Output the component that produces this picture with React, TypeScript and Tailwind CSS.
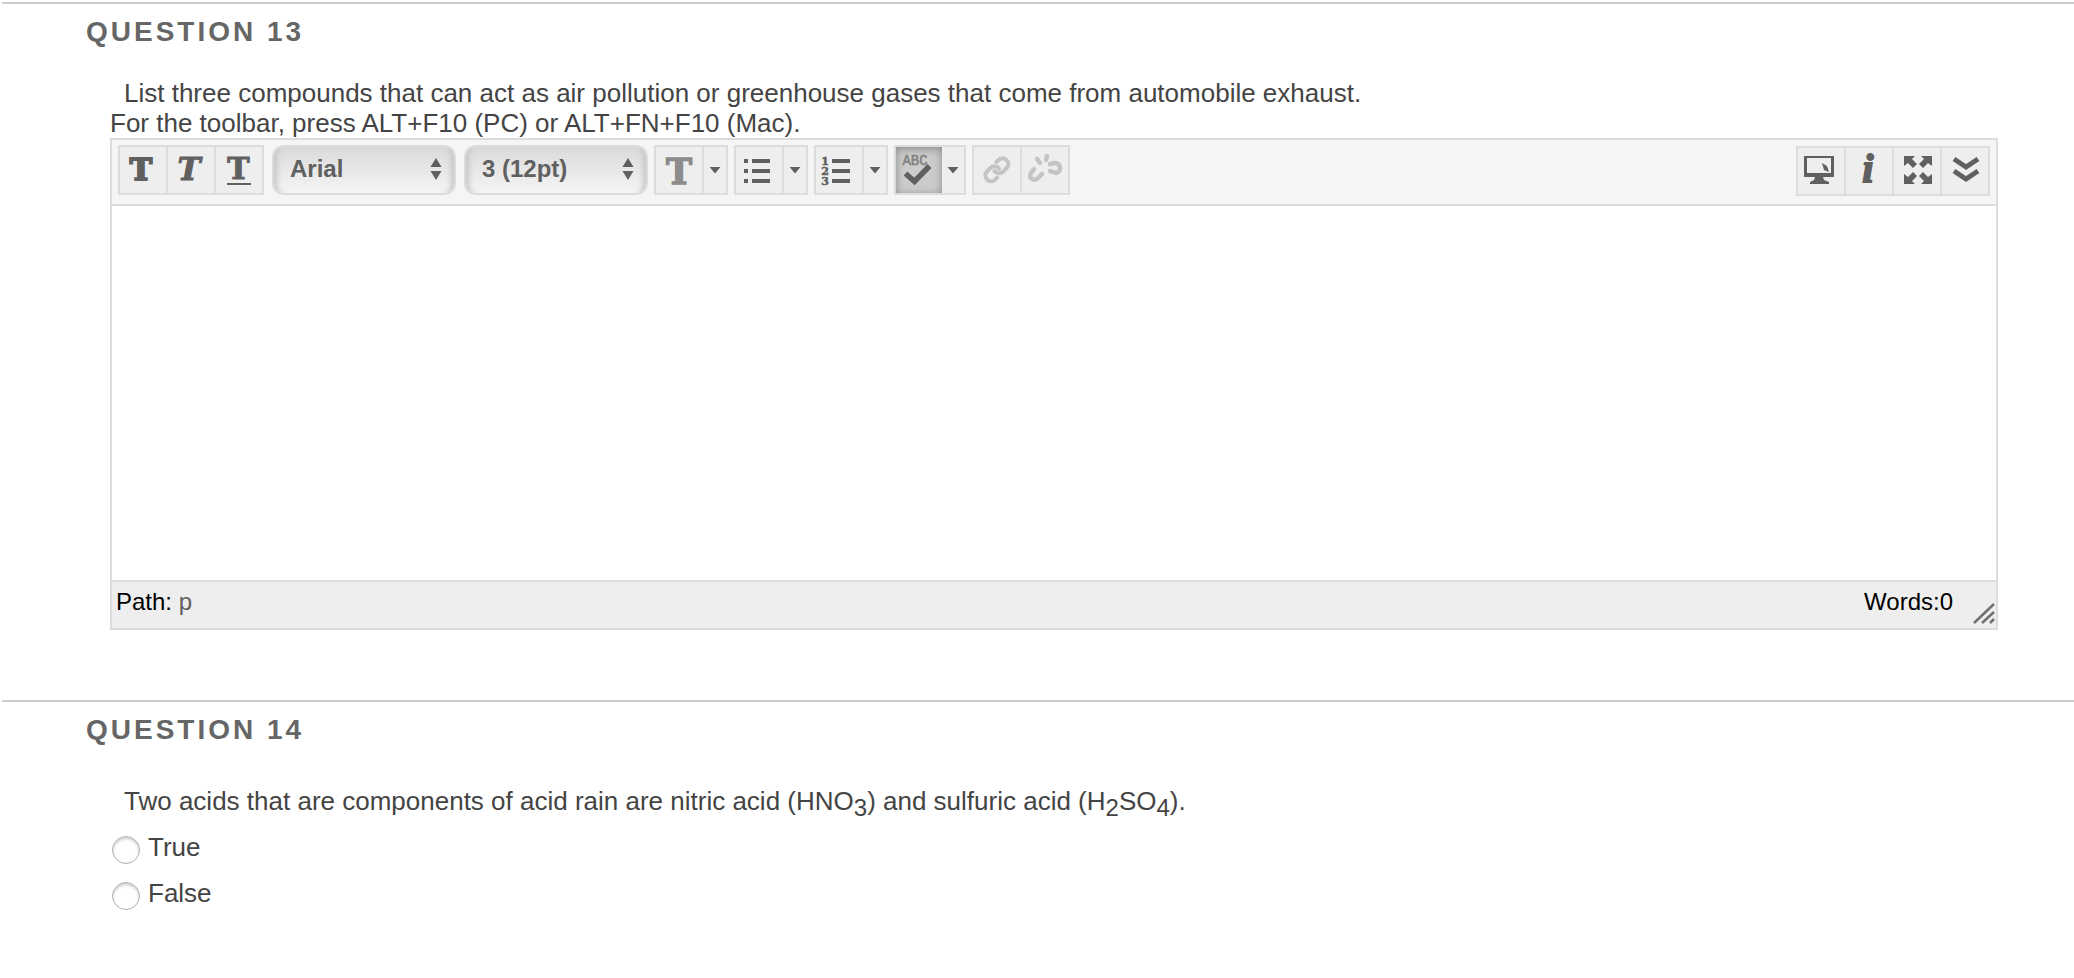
import React, { useState } from 'react';

const iconFont = '"DejaVu Serif", serif';

const Icon = ({ children }: { children: React.ReactNode }) => (
    <svg viewBox="0 0 46 46" className="block size-[46px]" fill="currentColor" aria-hidden="true">
        {children}
    </svg>
);

const ToolButton = ({ label, disabled, children }: { label: string; disabled?: boolean; children: React.ReactNode }) => (
    <button type="button" title={label} aria-label={label} disabled={disabled} className="bg-[#eeeeee] text-[#606060] disabled:text-[#c4c4c4]">
        <Icon>{children}</Icon>
    </button>
);

const MenuArrow = ({ label }: { label: string }) => (
    <button type="button" aria-label={label} className="bg-[#eeeeee] text-[#606060]">
        <svg viewBox="0 0 22 46" className="block h-[46px] w-[22px]" fill="currentColor" aria-hidden="true">
            <path d="M5.5 20h11L11 26.500z" />
        </svg>
    </button>
);

const Group = ({ children }: { children: React.ReactNode }) => (
    <div className="flex gap-[2px] border-2 border-[#dcdcdc] bg-[#dcdcdc]">{children}</div>
);

const ToolSelect = ({ label, options }: { label: string; options: string[] }) => {
    const [value, setValue] = useState(options[0]);

    return (
        <div className="relative">
            <select
                aria-label={label}
                value={value}
                onChange={e => setValue(e.target.value)}
                className="block h-[50px] w-[184px] appearance-none rounded-xl border-2 border-[#dcdcdc] bg-linear-to-b from-[#dadada] to-[#f5f5f5] pb-[2px] pl-4 text-2xl leading-7 font-bold text-[#606060] shadow-[inset_8px_0_6px_-6px_#bdbdbd,inset_-8px_0_6px_-6px_#bdbdbd]"
            >
                {options.map(option => <option key={option}>{option}</option>)}
            </select>
            <svg viewBox="0 0 12 24" className="pointer-events-none absolute top-3 right-3.5 h-6 w-3" fill="#606060" aria-hidden="true">
                <path d="M6 1l5.5 9H.5zM6 23l5.5-9H.5z" />
            </svg>
        </div>
    );
};

const Toolbar = () => (
    <div className="flex items-start justify-between border-b-2 border-[#dcdcdc] bg-[#f5f5f5] px-1.5 pt-[5px] pb-2">
        <div className="flex gap-1.5">
            <Group>
                <ToolButton label="Bold">
                    <text x="21" y="33" textAnchor="middle" fontFamily={iconFont} fontWeight="bold" fontSize="30" stroke="currentColor" strokeWidth="2">T</text>
                </ToolButton>
                <ToolButton label="Italic">
                    <text x="21" y="33" textAnchor="middle" fontFamily={iconFont} fontWeight="bold" fontStyle="italic" fontSize="31" stroke="currentColor">T</text>
                </ToolButton>
                <ToolButton label="Underline">
                    <text x="22.5" y="32" textAnchor="middle" fontFamily={iconFont} fontWeight="bold" fontSize="30" stroke="currentColor">T</text>
                    <path d="M11 36h24v2H11z" />
                </ToolButton>
            </Group>
            <div className="flex gap-2 pl-[2px]">
                <ToolSelect label="Font" options={['Arial', 'Courier New', 'Times New Roman', 'Verdana']} />
                <ToolSelect label="Font size" options={['3 (12pt)', '1 (8pt)', '2 (10pt)', '4 (14pt)', '5 (18pt)']} />
            </div>
            <Group>
                <ToolButton label="Text color">
                    <text x="23" y="37" textAnchor="middle" fontFamily={iconFont} fontWeight="bold" fontSize="35" fill="#8c8c8c" stroke="#8c8c8c" strokeWidth="1.5">T</text>
                </ToolButton>
                <MenuArrow label="Choose text color" />
            </Group>
            <Group>
                <ToolButton label="Bulleted list">
                    <path d="M8 12h4v4H8zM16 12h18v4H16zM8 22h4v4H8zM16 22h18v4H16zM8 32h4v4H8zM16 32h18v4H16z" />
                </ToolButton>
                <MenuArrow label="Bullet styles" />
            </Group>
            <Group>
                <ToolButton label="Numbered list">
                    <path d="M16 12h18v4H16zM16 22h18v4H16zM16 32h18v4H16z" />
                    <g fontFamily={iconFont} fontWeight="bold" fontSize="11" textAnchor="middle" stroke="currentColor" strokeWidth="0.5">
                        <text x="9" y="18">1</text>
                        <text x="9" y="28">2</text>
                        <text x="9" y="38">3</text>
                    </g>
                </ToolButton>
                <MenuArrow label="Number styles" />
            </Group>
            <div className="flex border-2 border-[#dcdcdc]">
                <button type="button" aria-label="Spellcheck" aria-pressed="true" className="bg-[#cccccc] text-[#606060] shadow-[inset_0_2px_8px_#888888]">
                    <Icon>
                        <text x="19" y="18" textAnchor="middle" fontFamily='"Liberation Mono", monospace' fontSize="14" fill="#808080" stroke="#808080" strokeWidth="0.5">ABC</text>
                        <path d="M9.5 26.500l9 8L33.500 19" fill="none" stroke="currentColor" strokeWidth="5.5" />
                    </Icon>
                </button>
                <MenuArrow label="Spellcheck language" />
            </div>
            <Group>
                <ToolButton label="Insert link" disabled>
                    <g transform="translate(9 9) scale(1.15)" fill="none" stroke="currentColor" strokeWidth="3.5" strokeLinecap="round">
                        <path d="M10 13a5 5 0 0 0 7.540.54l3-3a5 5 0 0 0-7.070-7.070l-1.720 1.710" />
                        <path d="M14 11a5 5 0 0 0-7.540-.54l-3 3a5 5 0 0 0 7.070 7.070l1.710-1.710" />
                    </g>
                </ToolButton>
                <ToolButton label="Remove link" disabled>
                    <g fill="none" stroke="currentColor" strokeWidth="4.5" strokeLinecap="round">
                        <path d="M12 22l-3 4c-3 5 3 9 7 5l4-4" />
                        <path d="M28 17l5-1c6 0 7 9 1 10l-6-2" />
                        <path d="M15 12l3 4M25 9l-1 4" />
                    </g>
                </ToolButton>
            </Group>
        </div>
        <div className="pt-px">
            <Group>
                <ToolButton label="Preview">
                    <path fillRule="evenodd" d="M6 8h30v21H6zM9 10v15h24V10z" />
                    <path d="M17 29h8l1 3 5 2v2H12v-2l4-2zM24 15l5 3 2 6-5-2z" />
                </ToolButton>
                <ToolButton label="Help">
                    <text x="22" y="34" textAnchor="middle" fontFamily='"Liberation Serif", serif' fontWeight="bold" fontStyle="italic" fontSize="39" stroke="currentColor" strokeWidth="2">i</text>
                </ToolButton>
                <ToolButton label="Full screen">
                    <path d="M10 8h11l-3 3 5 5-4 4-5-5-4 3zM38 8v10l-4-3-5 5-4-4 5-5-3-3zM10 36V26l4 3 5-5 4 4-5 5 3 3zM38 36H27l3-3-5-5 4-4 5 5 4-3z" />
                </ToolButton>
                <ToolButton label="Show more">
                    <path d="M12 11l12 8 12-8M12 23l12 8 12-8" fill="none" stroke="currentColor" strokeWidth="5" />
                </ToolButton>
            </Group>
        </div>
    </div>
);

const Editor = () => (
    <div className="border-2 border-[#dcdcdc]">
        <Toolbar />
        <textarea aria-label="Answer" className="block h-[374px] w-full resize-none bg-white p-4 outline-none" />
        <div className="flex h-12 items-start justify-between border-t-2 border-[#dcdcdc] bg-[#eeeeee] pl-1 text-2xl leading-10 text-black">
            <p>Path: <a href="#path" className="text-[#606060]">p</a></p>
            <div className="flex">
                <p>Words:0</p>
                <svg viewBox="0 0 22 22" className="mt-5 mr-px ml-5 size-[22px]" stroke="#707070" strokeWidth="2.5" aria-hidden="true">
                    <path d="M1 21L21 2M9 21L21 10M17 21l4-4" />
                </svg>
            </div>
        </div>
    </div>
);

const Question = ({ number, children }: { number: number; children: React.ReactNode }) => (
    <section className="ml-[2px] border-t-2 border-[#cccccc] pr-[76px] pl-[84px]">
        <h2 className="pt-2 pb-1 text-[28px] leading-10 font-bold tracking-[3px] text-[#666666]">QUESTION {number}</h2>
        <div className="pl-6 text-[26px] leading-[30px] text-[#444444]">{children}</div>
    </section>
);

const App = () => {
    const [answer, setAnswer] = useState('');

    return (
        <main className="bg-white pt-[2px] font-['Liberation_Sans',Arial,sans-serif]">
            <Question number={13}>
                <p className="pt-[22px] pl-3.5">
                    List three compounds that can act as air pollution or greenhouse gases that come from automobile exhaust.
                </p>
                <p>For the toolbar, press ALT+F10 (PC) or ALT+FN+F10 (Mac).</p>
                <Editor />
                <div className="h-[70px]" />
            </Question>
            <Question number={14}>
                <p id="question-14" className="pt-8 pl-3.5">
                    Two acids that are components of acid rain are nitric acid (HNO<sub className="text-2xl leading-none">3</sub>) and sulfuric acid (H<sub className="text-2xl leading-none">2</sub>SO<sub className="text-2xl leading-none">4</sub>).
                </p>
                <div role="radiogroup" aria-labelledby="question-14" className="flex flex-col gap-3.5 pt-4 pl-[2px]">
                    {['True', 'False'].map(option => (
                        <label key={option} className="flex items-start gap-2">
                            <input
                                type="radio"
                                name="question-14"
                                value={option}
                                checked={answer === option}
                                onChange={() => setAnswer(option)}
                                className="mt-1 size-7 appearance-none rounded-full border border-[#b0b0b0] bg-white shadow-[inset_0_2px_3px_#cccccc] checked:border-8"
                            />
                            {option}
                        </label>
                    ))}
                </div>
            </Question>
        </main>
    );
};

export default App;
